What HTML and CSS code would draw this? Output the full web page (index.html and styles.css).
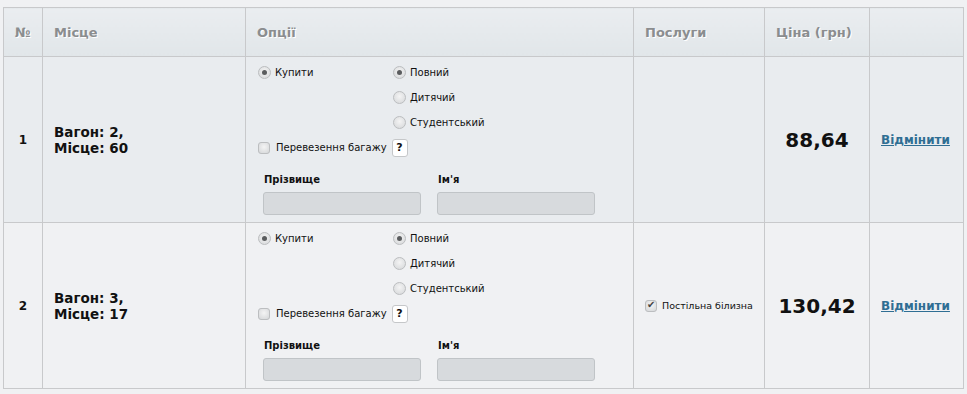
FILE: index.html
```html
<!DOCTYPE html>
<html lang="uk">
<head>
  <meta charset="UTF-8" />
  <meta name="viewport" content="width=device-width, initial-scale=1.0"/>
  <title>Квитки - кошик</title>
  <link rel="stylesheet" href="styles.css">
</head>
<body>

  <table class="cart">
    <colgroup>
      <col class="c-num"><col class="c-place"><col class="c-opts"><col class="c-serv"><col class="c-price"><col class="c-act">
    </colgroup>
    <thead>
      <tr>
        <th>№</th>
        <th>Місце</th>
        <th>Опції</th>
        <th>Послуги</th>
        <th>Ціна (грн)</th>
        <th></th>
      </tr>
    </thead>
    <tbody>
      <tr class="odd">
        <td class="num">1</td>
        <td class="place">Вагон: 2,<br>Місце: 60</td>
        <td class="opts">
          <div class="opt-grid">
            <label class="line"><input type="radio" name="kind1" checked> Купити</label>
            <div class="types">
              <label class="line"><input type="radio" name="type1" checked> Повний</label>
              <label class="line"><input type="radio" name="type1"> Дитячий</label>
              <label class="line"><input type="radio" name="type1"> Студентський</label>
            </div>
          </div>
          <div class="line"><label><input type="checkbox"> Перевезення багажу</label> <span class="help">?</span></div>
          <div class="names">
            <div class="field"><span>Прізвище</span><input type="text"></div>
            <div class="field"><span>Ім'я</span><input type="text"></div>
          </div>
        </td>
        <td class="serv"></td>
        <td class="price">88,64</td>
        <td class="act"><a href="#">Відмінити</a></td>
      </tr>
      <tr class="even">
        <td class="num">2</td>
        <td class="place">Вагон: 3,<br>Місце: 17</td>
        <td class="opts">
          <div class="opt-grid">
            <label class="line"><input type="radio" name="kind2" checked> Купити</label>
            <div class="types">
              <label class="line"><input type="radio" name="type2" checked> Повний</label>
              <label class="line"><input type="radio" name="type2"> Дитячий</label>
              <label class="line"><input type="radio" name="type2"> Студентський</label>
            </div>
          </div>
          <div class="line"><label><input type="checkbox"> Перевезення багажу</label> <span class="help">?</span></div>
          <div class="names">
            <div class="field"><span>Прізвище</span><input type="text"></div>
            <div class="field"><span>Ім'я</span><input type="text"></div>
          </div>
        </td>
        <td class="serv"><label><input type="checkbox" checked> Постільна білизна</label></td>
        <td class="price">130,42</td>
        <td class="act"><a href="#">Відмінити</a></td>
      </tr>
    </tbody>
  </table>

</body>
</html>
```

FILE: styles.css
```css
body {
  margin: 0;
  padding: 7px 0 0 3px;
  background: #f0f1f3;
  font-family: "DejaVu Sans", Verdana, sans-serif;
  color: #111;
}
.cart {
  border-collapse: collapse;
  table-layout: fixed;
  width: 960px;
}
.c-num { width: 39px; }
.c-place { width: 203px; }
.c-opts { width: 388px; }
.c-serv { width: 131px; }
.c-price { width: 105px; }
.c-act { width: 94px; }
.cart th,
.cart td {
  border: 1px solid #c8c9cb;
  padding: 0 11px;
}
.cart th {
  height: 48px;
  text-align: left;
  font-size: 13px;
  font-weight: bold;
  color: #8b8d8f;
  text-shadow: 1px 1px 0 #fff;
  background: linear-gradient(#eaedf0, #e1e6e9);
}
.odd td { background: #e9ecef; }
.even td { background: #f0f1f3; }
.num {
  text-align: center;
  font-size: 12px;
  font-weight: bold;
}
.place {
  font-size: 13.5px;
  font-weight: bold;
  line-height: 16px;
}
.price {
  text-align: center;
  font-size: 20px;
  font-weight: bold;
}
.act {
  font-size: 12px;
  font-weight: bold;
}
.act a {
  color: #2f6e93;
}
.cart td.opts {
  vertical-align: top;
  padding: 3px 12px 7px 12px;
  font-size: 10px;
}
.opt-grid {
  display: grid;
  grid-template-columns: 135px 1fr;
}
.line {
  display: flex;
  align-items: center;
  height: 25px;
}
.line label {
  display: flex;
  align-items: center;
}
.types {
  display: flex;
  flex-direction: column;
}
input[type="radio"],
input[type="checkbox"] {
  appearance: none;
  flex-shrink: 0;
  margin: 0 4px 0 0;
  width: 13px;
  height: 13px;
  border: 1px solid #bcbec0;
  background: radial-gradient(circle at 50% 40%, #f4f4f4, #d4d6d8);
  position: relative;
}
input[type="radio"] {
  border-radius: 50%;
}
input[type="radio"]:checked::after {
  content: "";
  position: absolute;
  left: 3px;
  top: 3px;
  width: 5px;
  height: 5px;
  border-radius: 50%;
  background: #5a5c5e;
}
input[type="checkbox"] {
  width: 12px;
  height: 12px;
  border-radius: 3px;
  margin-right: 6px;
}
input[type="checkbox"]:checked::after {
  content: "\2714";
  position: absolute;
  left: 1px;
  top: -2px;
  font-size: 10px;
  color: #444;
}
.help {
  display: inline-block;
  margin-left: 5px;
  width: 14px;
  height: 16px;
  line-height: 16px;
  text-align: center;
  border: 1px solid #c5c7c9;
  border-radius: 3px;
  background: #fff;
  font-weight: bold;
  font-size: 11px;
}
.names {
  display: flex;
  gap: 16px;
  margin: 11px 0 0 5px;
}
.field {
  display: flex;
  flex-direction: column;
}
.field span {
  font-weight: bold;
  line-height: 18px;
  padding-left: 1px;
}
.field input {
  margin-top: 3px;
  width: 158px;
  height: 23px;
  box-sizing: border-box;
  border: 1px solid #c0c4c7;
  border-radius: 3px;
  background: #d7dadd;
}
.serv {
  font-size: 9.5px;
  white-space: nowrap;
}
.serv label {
  display: flex;
  align-items: center;
}
.serv input[type="checkbox"] {
  margin-right: 5px;
}
```
